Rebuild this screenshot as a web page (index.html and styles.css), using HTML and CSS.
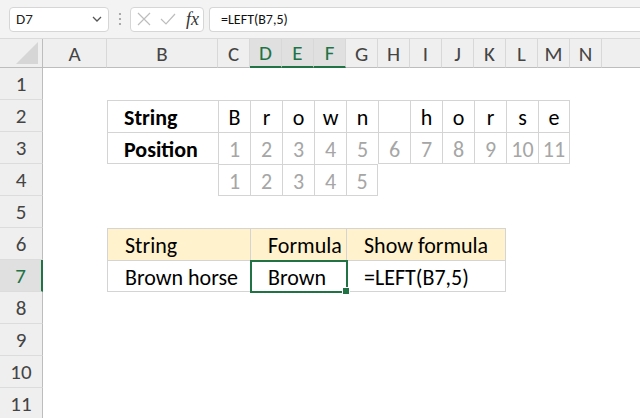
FILE: index.html
```html
<!DOCTYPE html>
<html>
<head>
<meta charset="utf-8">
<link rel="stylesheet" href="styles.css">
</head>
<body>
<div class="app">
  <div class="toolbar">
    <div class="namebox">
      <span class="name">D7</span>
      <svg class="chev" width="10" height="6" viewBox="0 0 10 6"><path d="M1 1 L5 5 L9 1" fill="none" stroke="#555" stroke-width="1.3"/></svg>
    </div>
    <svg class="dots" width="4" height="14" viewBox="0 0 4 14"><circle cx="2" cy="2" r="1.1" fill="#999"/><circle cx="2" cy="7" r="1.1" fill="#999"/><circle cx="2" cy="12" r="1.1" fill="#999"/></svg>
    <div class="fxbox">
      <svg width="14" height="14" viewBox="0 0 14 14"><path d="M1 1 L13 13 M13 1 L1 13" stroke="#bdbdbd" stroke-width="1.2" fill="none"/></svg>
      <svg width="16" height="14" viewBox="0 0 16 14"><path d="M1 7 L6 12 L15 2" stroke="#bdbdbd" stroke-width="1.2" fill="none"/></svg>
      <span class="fx">fx</span>
    </div>
    <div class="formula">=LEFT(B7,5)</div>
  </div>

  <div class="sheet">
    <div class="row hdr">
      <div class="corner"><svg width="23" height="22" viewBox="0 0 23 22"><path d="M22 0 L22 22 L0 22 Z" fill="#d6d6d6"/></svg></div>
      <div class="ch">A</div><div class="ch">B</div><div class="ch">C</div>
      <div class="ch csel">D</div><div class="ch csel">E</div><div class="ch csel">F</div>
      <div class="ch">G</div><div class="ch">H</div><div class="ch">I</div><div class="ch">J</div>
      <div class="ch">K</div><div class="ch">L</div><div class="ch">M</div><div class="ch">N</div>
      <div class="ch rest"></div>
    </div>

    <div class="row"><div class="rh">1</div></div>

    <div class="row">
      <div class="rh">2</div>
      <div class="c at-b lab">String</div>
      <div class="c ch1">B</div><div class="c ch1">r</div><div class="c ch1">o</div><div class="c ch1">w</div><div class="c ch1">n</div><div class="c ch1"></div>
      <div class="c ch1">h</div><div class="c ch1">o</div><div class="c ch1">r</div><div class="c ch1">s</div><div class="c ch1 er">e</div>
    </div>

    <div class="row">
      <div class="rh">3</div>
      <div class="c at-b lab eb">Position</div>
      <div class="c num">1</div><div class="c num">2</div><div class="c num">3</div><div class="c num">4</div><div class="c num">5</div>
      <div class="c num eb">6</div><div class="c num eb">7</div><div class="c num eb">8</div><div class="c num eb">9</div><div class="c num eb">10</div><div class="c num eb er">11</div>
    </div>

    <div class="row">
      <div class="rh">4</div>
      <div class="c at-c num eb">1</div><div class="c num eb">2</div><div class="c num eb">3</div><div class="c num eb">4</div><div class="c num eb er">5</div>
    </div>

    <div class="row"><div class="rh">5</div></div>

    <div class="row">
      <div class="rh">6</div>
      <div class="c at-b span2 yel txt">String</div>
      <div class="c span3 yel txt">Formula</div>
      <div class="c span5 yel txt er">Show formula</div>
    </div>

    <div class="row">
      <div class="rh rsel">7</div>
      <div class="c at-b span2 txt eb">Brown horse</div>
      <div class="c span3 txt eb sel">Brown</div>
      <div class="c span5 txt eb er">=LEFT(B7,5)</div>
    </div>

    <div class="row"><div class="rh">8</div></div>
    <div class="row"><div class="rh">9</div></div>
    <div class="row"><div class="rh">10</div></div>
    <div class="row"><div class="rh">11</div></div>
  </div>
</div>
</body>
</html>
```

FILE: styles.css
```css
* { box-sizing: border-box; }
html, body { margin: 0; padding: 0; }
body {
  width: 640px;
  height: 418px;
  overflow: hidden;
  background: #fff;
  font-family: Carlito, Calibri, Lato, sans-serif;
}
.app { width: 640px; height: 418px; overflow: hidden; }

.toolbar {
  height: 39px;
  background: #f3f3f3;
  display: flex;
  align-items: center;
  padding-left: 9px;
  border-bottom: 1px solid #dadada;
}
.namebox {
  width: 100px;
  height: 25px;
  background: #fff;
  border: 1px solid #d6d6d6;
  border-radius: 4px;
  display: flex;
  align-items: center;
  justify-content: space-between;
  padding: 0 6px 0 6px;
  font-size: 15px;
  color: #222;
}
.dots { margin-left: 9px; }
.fxbox {
  margin-left: 8px;
  width: 74px;
  height: 25px;
  background: #fff;
  border: 1px solid #d6d6d6;
  border-radius: 4px;
  display: flex;
  align-items: center;
  gap: 9px;
  padding-left: 6px;
}
.fx {
  font-family: "Liberation Serif", serif;
  font-style: italic;
  font-size: 18px;
  color: #333;
  margin-left: 1px;
}
.formula {
  margin-left: 5px;
  flex: 1;
  height: 25px;
  background: #fff;
  border: 1px solid #d6d6d6;
  border-right: none;
  border-radius: 4px 0 0 4px;
  display: flex;
  align-items: center;
  padding-left: 11px;
  font-size: 14px;
  color: #111;
}

.sheet { display: flex; flex-direction: column; }
.row {
  display: grid;
  grid-template-columns: 43px 64px 111px repeat(12, 32px) 1fr;
  height: 32px;
}
.row.hdr { height: 29px; background: #efefef; }

.corner {
  background: #efefef;
  border-right: 1px solid #bdbdbd;
  border-bottom: 1px solid #bdbdbd;
  display: flex;
  align-items: flex-end;
  justify-content: flex-end;
  padding: 0 3px 3px 0;
}
.ch {
  display: flex;
  align-items: center;
  justify-content: center;
  font-size: 21px;
  color: #444;
  border-right: 1px solid #d8d8d8;
  border-bottom: 1px solid #bdbdbd;
  padding-top: 1px;
}
.ch.rest { border-right: none; }
.ch.csel {
  background: #e0e0e0;
  color: #217346;
  border-bottom: 2px solid #217346;
}

.rh {
  background: #efefef;
  display: flex;
  align-items: center;
  justify-content: center;
  font-size: 21px;
  color: #444;
  border-right: 1px solid #bdbdbd;
  border-bottom: 1px solid #dcdcdc;
}
.rh.rsel {
  background: #e0e0e0;
  color: #217346;
  border-right: 2px solid #217346;
}

.c {
  border-left: 1px solid #d4d4d4;
  border-top: 1px solid #d4d4d4;
  display: flex;
  align-items: center;
  justify-content: center;
  font-size: 22px;
  color: #000;
  padding-top: 2px;
  white-space: nowrap;
  min-width: 0;
}
.c.er { border-right: 1px solid #d4d4d4; }
.c.eb { border-bottom: 1px solid #d4d4d4; }
.at-b { grid-column-start: 3; }
.at-c { grid-column-start: 4; }
.span2 { grid-column-end: span 2; }
.span3 { grid-column-end: span 3; }
.span5 { grid-column-end: span 5; }

.lab { justify-content: flex-start; padding-left: 16px; font-weight: bold; }
.txt { justify-content: flex-start; padding-left: 17px; }
.num { color: #a6a6a6; }
.yel { background: #fff2cc; }

.sel { position: relative; }
.sel::before {
  content: "";
  position: absolute;
  left: -1px;
  top: -1px;
  right: -2px;
  bottom: -2px;
  border: 2px solid #217346;
}
.sel::after {
  content: "";
  position: absolute;
  width: 6px;
  height: 6px;
  right: -4px;
  bottom: -4px;
  background: #217346;
  border: 1px solid #fff;
  box-sizing: content-box;
}
```
